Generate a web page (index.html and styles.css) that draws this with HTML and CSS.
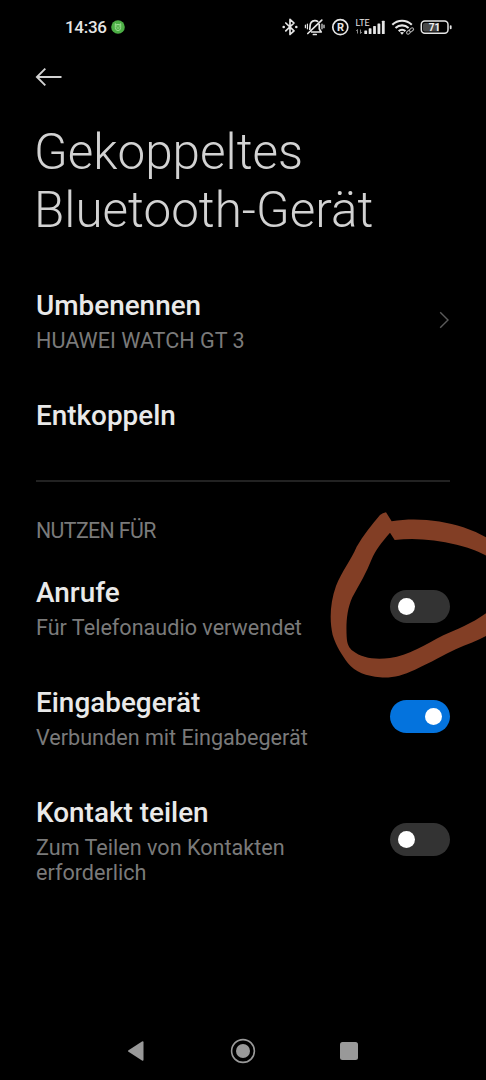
FILE: index.html
```html
<!DOCTYPE html>
<html lang="de">
<head>
<meta charset="utf-8">
<title>Gekoppeltes Bluetooth-Gerät</title>
<link rel="stylesheet" href="styles.css">
</head>
<body>
<div class="screen">
  <header class="status">
    <span class="clock">14:36</span>
    <svg class="app-dot" width="14" height="14" viewBox="0 0 14 14"><circle cx="7" cy="7" r="6.8" fill="#4caf45"/><g fill="none" stroke="#a5e29b" stroke-width=".9"><path d="M4.300 3.700l1 .8h3.400l1-.8v3.800c0 2-1.200 3-2.700 3s-2.700-1-2.700-3zM5 6h1.400M7.600 6H9M5.500 8h3"/></g></svg>
    <svg class="status-icons" width="174" height="24" viewBox="280 15 174 24">
      <g fill="none" stroke="#e6e6e6" stroke-width="1.700" stroke-linecap="round" stroke-linejoin="round">
        <path d="M285.800 23l8.200 7.800-4 3.700V19.300l4 3.700-8.200 7.800"/>
        <path d="M309.800 29.200l.3-3.600c.2-2.700 2-4.600 4.500-4.900 1.200-.1 2.200.1 3 .7M319.300 24.600v4.400l1.900 3h-9.500M307.800 33.500l14-13.300M313.400 34.500h2.800"/>
        <path d="M307.400 24v4.800M305.400 25.200v2.500M322 24v4.800M324 25.200v2.500" stroke-width="1.200"/>
        <circle cx="340.300" cy="27.200" r="7.500" stroke-width="1.700"/>
      </g>
      <g fill="#e6e6e6">
        <circle cx="283.700" cy="27" r="1.300"/><circle cx="296.300" cy="27" r="1.300"/>
        <text x="340.500" y="31.300" class="badge-r" text-anchor="middle">R</text>
        <text x="355.500" y="25.500" class="lte">LTE</text>
        <rect x="364.300" y="30.500" width="2.800" height="3.500" rx=".6"/>
        <rect x="368.700" y="28.300" width="2.800" height="5.700" rx=".6"/>
        <rect x="373.100" y="26" width="2.800" height="8" rx=".6"/>
        <rect x="377.500" y="23.500" width="2.800" height="10.500" rx=".6"/>
        <rect x="381.900" y="20.700" width="2.800" height="13.300" rx=".6"/>
      </g>
      <path d="M357.500 33.500v-4l-1.300 1.500M360.500 29.500v4l1.300-1.500" fill="none" stroke="#888"/>
      <g fill="none" stroke="#e6e6e6" stroke-width="2.100">
        <path d="M392.300 24.700c5.500-5.300 14-5.300 19.500 0M395.500 28c3.700-3.500 9.400-3.500 13.100 0M398.700 31.100c1.900-1.700 4.800-1.700 6.700 0"/>
      </g>
      <path d="M400 32.500q2-1.200 4 0l-2 2.200z" fill="#e6e6e6"/>
      <g fill="#000" stroke="#aaa" stroke-width="1.100"><rect x="406.300" y="30.800" width="4.600" height="2.800" rx="1.400" transform="rotate(-42 408.600 32.200)"/><rect x="409.200" y="28.400" width="4.600" height="2.800" rx="1.400" transform="rotate(-42 411.500 29.800)"/></g>
      <rect x="421.300" y="21.100" width="26.700" height="12.200" rx="3.500" fill="none" stroke="#e6e6e6" stroke-width="1.500"/>
      <path d="M425 23h14v8.500h-14a2 2 0 0 1-2-2v-4.500a2 2 0 0 1 2-2z" fill="#484848"/>
      <rect x="449.800" y="25.200" width="1.800" height="4" rx=".9" fill="#e6e6e6"/>
      <text x="434.400" y="31" class="battery" text-anchor="middle" fill="#eee">71</text>
    </svg>
  </header>

  <div class="back">
    <svg width="28" height="20" viewBox="0 0 28 20" fill="none" stroke="#d2d2d2" stroke-width="1.900"><path d="M26.500 10H2M10.300 1.600L1.900 10l8.400 8.400"/></svg>
  </div>
  <h1 class="title">Gekoppeltes<br>Bluetooth-Gerät</h1>

  <main class="list">
    <div class="row">
      <div class="label"><h2>Umbenennen</h2><p>HUAWEI WATCH GT 3</p></div>
      <svg class="chevron" width="11" height="18" viewBox="0 0 11 18" fill="none" stroke="#5a5a5a" stroke-width="1.400"><path d="M1.200 1.200L9 9l-7.800 7.800"/></svg>
    </div>
    <div class="row"><div class="label"><h2>Entkoppeln</h2></div></div>
    <hr class="divider">
    <p class="section">NUTZEN FÜR</p>
    <div class="row">
      <div class="label"><h2>Anrufe</h2><p>Für Telefonaudio verwendet</p></div>
      <span class="toggle"></span>
      <svg class="marker" width="166" height="190" viewBox="0 0 498 570"><path fill="#823e25" d="M198 37L215 64C290 52 365 62 430 82Q470 95 510 119V173C470 151 445 142 410 134C345 119 285 112 224 120L210 98C185 127 166 150 155 178C140 218 117 255 97 292C80 330 78 370 80 410C81 432 87 444 99 453C125 474 165 480 210 474C265 467 315 434 370 406C415 386 460 370 510 331V401C480 421 445 431 407 448C370 465 335 487 285 509C245 527 215 535 180 532C140 529 105 516 84 490C66 465 49 440 38 405C28 360 30 310 48 258C65 215 93 180 110 140C130 105 155 75 180 45Q188 39 198 37Z"/></svg>
    </div>
    <div class="row">
      <div class="label"><h2>Eingabegerät</h2><p>Verbunden mit Eingabegerät</p></div>
      <span class="toggle on"></span>
    </div>
    <div class="row">
      <div class="label"><h2>Kontakt teilen</h2><p>Zum Teilen von Kontakten<br>erforderlich</p></div>
      <span class="toggle"></span>
    </div>
  </main>

  <nav class="nav">
    <svg width="18" height="22" viewBox="0 0 18 22"><path d="M1.500 10.200L15 1.500q1.500-.8 1.500.8v17.400q0 1.600-1.500.8L1.500 11.800q-1.200-.8 0-1.600z" fill="#999"/></svg>
    <svg width="26" height="26" viewBox="0 0 26 26"><circle cx="13" cy="13" r="11.400" fill="none" stroke="#999" stroke-width="1.600"/><circle cx="13" cy="13" r="7" fill="#999"/></svg>
    <svg width="18" height="18" viewBox="0 0 18 18"><rect width="18" height="18" rx="2.500" fill="#999"/></svg>
  </nav>
</div>
</body>
</html>
```
FILE: styles.css
```css
* { box-sizing: border-box; margin: 0; padding: 0; }
body { background: #000; font-family: Roboto, sans-serif; }
svg { display: block; flex: none; }

.screen {
  width: 486px;
  height: 1080px;
  overflow: hidden;
  display: flex;
  flex-direction: column;
  background: #000;
}

.status {
  display: flex;
  align-items: center;
  height: 54px;
  padding: 0 32px 0 65px;
}
.clock { color: #e6e6e6; font-size: 17px; font-weight: 500; line-height: 20px; letter-spacing: -0.3px; }
.app-dot { margin-left: 4px; }
.status-icons { margin-left: auto; }
.badge-r { font-size: 11px; font-weight: 700; }
.lte { font-size: 9px; }
.battery { font-size: 10px; font-weight: 700; }

.back { padding: 13px 35px 0; height: 69px; }

.title {
  padding-left: 34px;
  color: #d2d2d2;
  font-size: 49.4px;
  font-weight: 300;
  line-height: 58px;
  white-space: nowrap;
}

.list { padding: 27px 36px 0; flex: 1; }
.row {
  position: relative;
  display: flex;
  align-items: center;
  justify-content: space-between;
  padding: 23px 0 22.6px;
}
.row h2 {
  color: #e9e9e9;
  font-size: 27.9px;
  font-weight: 500;
  line-height: 34px;
}
.row p { margin-top: 5px; }
.row p, .section {
  color: #7a7a7a;
  font-size: 21.6px;
  line-height: 25.4px;
  white-space: nowrap;
}
.chevron { margin-bottom: 2px; }
.divider { border: 0; height: 2px; margin-top: 24.4px; background: #222; }
.section { margin: 36px 0 9px; font-size: 21.3px; line-height: 26px; letter-spacing: -0.6px; }

.toggle {
  display: flex;
  align-items: center;
  width: 60px;
  height: 33px;
  margin-bottom: 3px;
  padding: 0 8px;
  border-radius: 17px;
  background: #333;
}
.toggle::before {
  content: "";
  width: 17px;
  height: 17px;
  border-radius: 50%;
  background: #fff;
}
.toggle.on { justify-content: flex-end; background: #0473dd; }

/* Hand-drawn loop over the calls switch */
.marker { position: absolute; right: -36px; top: -53px; pointer-events: none; }

.nav {
  display: flex;
  align-items: center;
  justify-content: space-between;
  height: 59px;
  padding: 0 128px 0 127px;
}
```
